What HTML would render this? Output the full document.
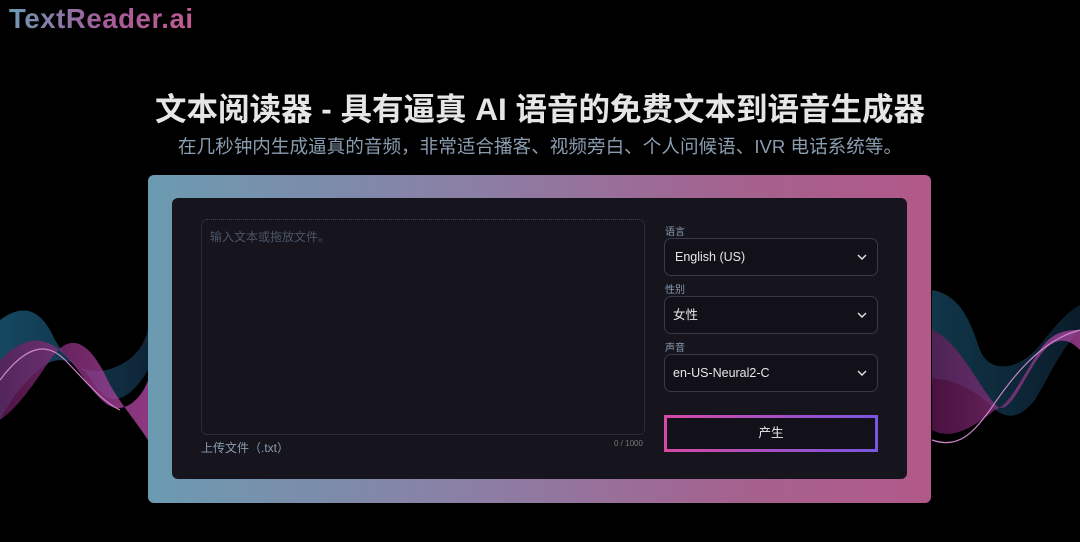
<!DOCTYPE html>
<html><head><meta charset="utf-8"><style>
*{margin:0;padding:0;box-sizing:border-box}
body{width:1080px;height:542px;background:#000;overflow:hidden;position:relative;font-family:"Liberation Sans","Noto Sans CJK SC",sans-serif;color:#ddd}
.logo{position:absolute;left:9px;top:3px;font-size:27.5px;font-weight:bold;background:linear-gradient(90deg,#6d9ab4,#a35d9a,#c15a90);-webkit-background-clip:text;color:transparent;letter-spacing:0.6px}
h1{position:absolute;left:0;width:1080px;top:84px;text-align:center;font-size:31.5px;font-weight:bold;color:#e6e6e6}
.sub{position:absolute;left:0;width:1080px;top:132px;text-align:center;font-size:18.6px;color:#8a9cb0}
.outer{position:absolute;left:148px;top:175px;width:783px;height:328px;border-radius:6px;background:linear-gradient(90deg,#6b9bb1,#8a80a6 40%,#a4628f 75%,#b2598a)}
.inner{position:absolute;left:172px;top:198px;width:735px;height:281px;border-radius:6px;background:#16151e}
.ta{position:absolute;left:201px;top:219px;width:444px;height:216px;border:1.5px dotted #44444f;border-radius:6px}
.ph{position:absolute;left:210px;top:228px;font-size:12px;color:#4b5566}
.up{position:absolute;left:201px;top:439px;font-size:12px;color:#8a9cb0}
.cnt{position:absolute;left:614px;top:439px;font-size:8px;color:#777}
.lab{position:absolute;left:665px;font-size:10px;color:#8a9cb0}
.sel{position:absolute;left:664px;width:214px;height:38px;border:1px solid #3a3a48;border-radius:7px;background:#121119;font-size:12.5px;color:#e6e6e6;line-height:36px;padding-left:10px}
.sel svg{position:absolute;right:10px;top:15px}
.btn{position:absolute;left:664px;top:415px;width:214px;height:37px;border:3px solid;border-image:linear-gradient(90deg,#d54aa5,#7a55e0) 1;background:#121119;text-align:center;line-height:31px;font-size:12.5px;color:#eee}
</style></head><body>
<svg width="1080" height="542" style="position:absolute;left:0;top:0">
<defs>
<linearGradient id="b" x1="0" x2="1"><stop offset="0" stop-color="#2a8fc0"/><stop offset="1" stop-color="#1d4a6e"/></linearGradient>
<linearGradient id="p" x1="0" x2="1"><stop offset="0" stop-color="#7a1f6a"/><stop offset="1" stop-color="#e05ad0"/></linearGradient>
</defs>
<g opacity="0.85">
<path d="M0 320 C20 305 40 305 55 340 C70 365 90 380 120 365 C140 355 145 340 148 330 L148 370 C130 400 110 410 95 385 C80 360 60 355 45 365 C25 380 10 400 0 420Z" fill="url(#b)" opacity="0.6"/>
<path d="M0 360 C30 330 50 340 65 355 C85 375 100 410 120 408 C135 406 145 390 148 380 L148 440 C135 420 125 410 110 385 C90 340 70 330 50 360 C30 390 15 410 0 420Z" fill="url(#p)" opacity="0.75"/>
<path d="M932 290 C960 295 970 320 980 350 C990 375 1020 370 1040 345 C1060 320 1070 310 1080 305 L1080 330 C1060 350 1050 375 1035 400 C1015 425 1000 415 990 405 C975 390 955 380 932 378Z" fill="url(#b)" opacity="0.45"/>
<path d="M932 330 C960 340 985 400 1000 408 C1015 410 1030 360 1050 345 C1065 335 1075 345 1080 350 L1080 330 C1060 330 1050 335 1040 350 C1020 380 1010 405 995 410 C970 430 950 440 932 430Z" fill="url(#p)" opacity="0.7"/>
<path d="M932 440 C960 450 975 430 990 410 C1010 380 1040 340 1080 330" stroke="#f0a0f0" stroke-width="1.2" fill="none"/>
<path d="M0 380 C30 340 50 345 65 360 C85 380 100 400 120 410" stroke="#f0a0f0" stroke-width="1.2" fill="none"/>
</g>
</svg>
<div class="logo">TextReader.ai</div>
<h1>文本阅读器 - 具有逼真 AI 语音的免费文本到语音生成器</h1>
<div class="sub">在几秒钟内生成逼真的音频，非常适合播客、视频旁白、个人问候语、IVR 电话系统等。</div>
<div class="outer"></div>
<div class="inner"></div>
<div class="ta"></div>
<div class="ph">输入文本或拖放文件。</div>
<div class="up">上传文件（.txt）</div>
<div class="cnt">0 / 1000</div>
<div class="lab" style="top:223px">语言</div>
<div class="sel" style="top:238px">English (US)<svg width="10" height="6"><path d="M1 1L5 5L9 1" stroke="#ddd" stroke-width="1.5" fill="none"/></svg></div>
<div class="lab" style="top:281px">性别</div>
<div class="sel" style="top:296px;padding-left:8px">女性<svg width="10" height="6"><path d="M1 1L5 5L9 1" stroke="#ddd" stroke-width="1.5" fill="none"/></svg></div>
<div class="lab" style="top:339px">声音</div>
<div class="sel" style="top:354px;padding-left:8px">en-US-Neural2-C<svg width="10" height="6"><path d="M1 1L5 5L9 1" stroke="#ddd" stroke-width="1.5" fill="none"/></svg></div>
<div class="btn">产生</div>
</body></html>
